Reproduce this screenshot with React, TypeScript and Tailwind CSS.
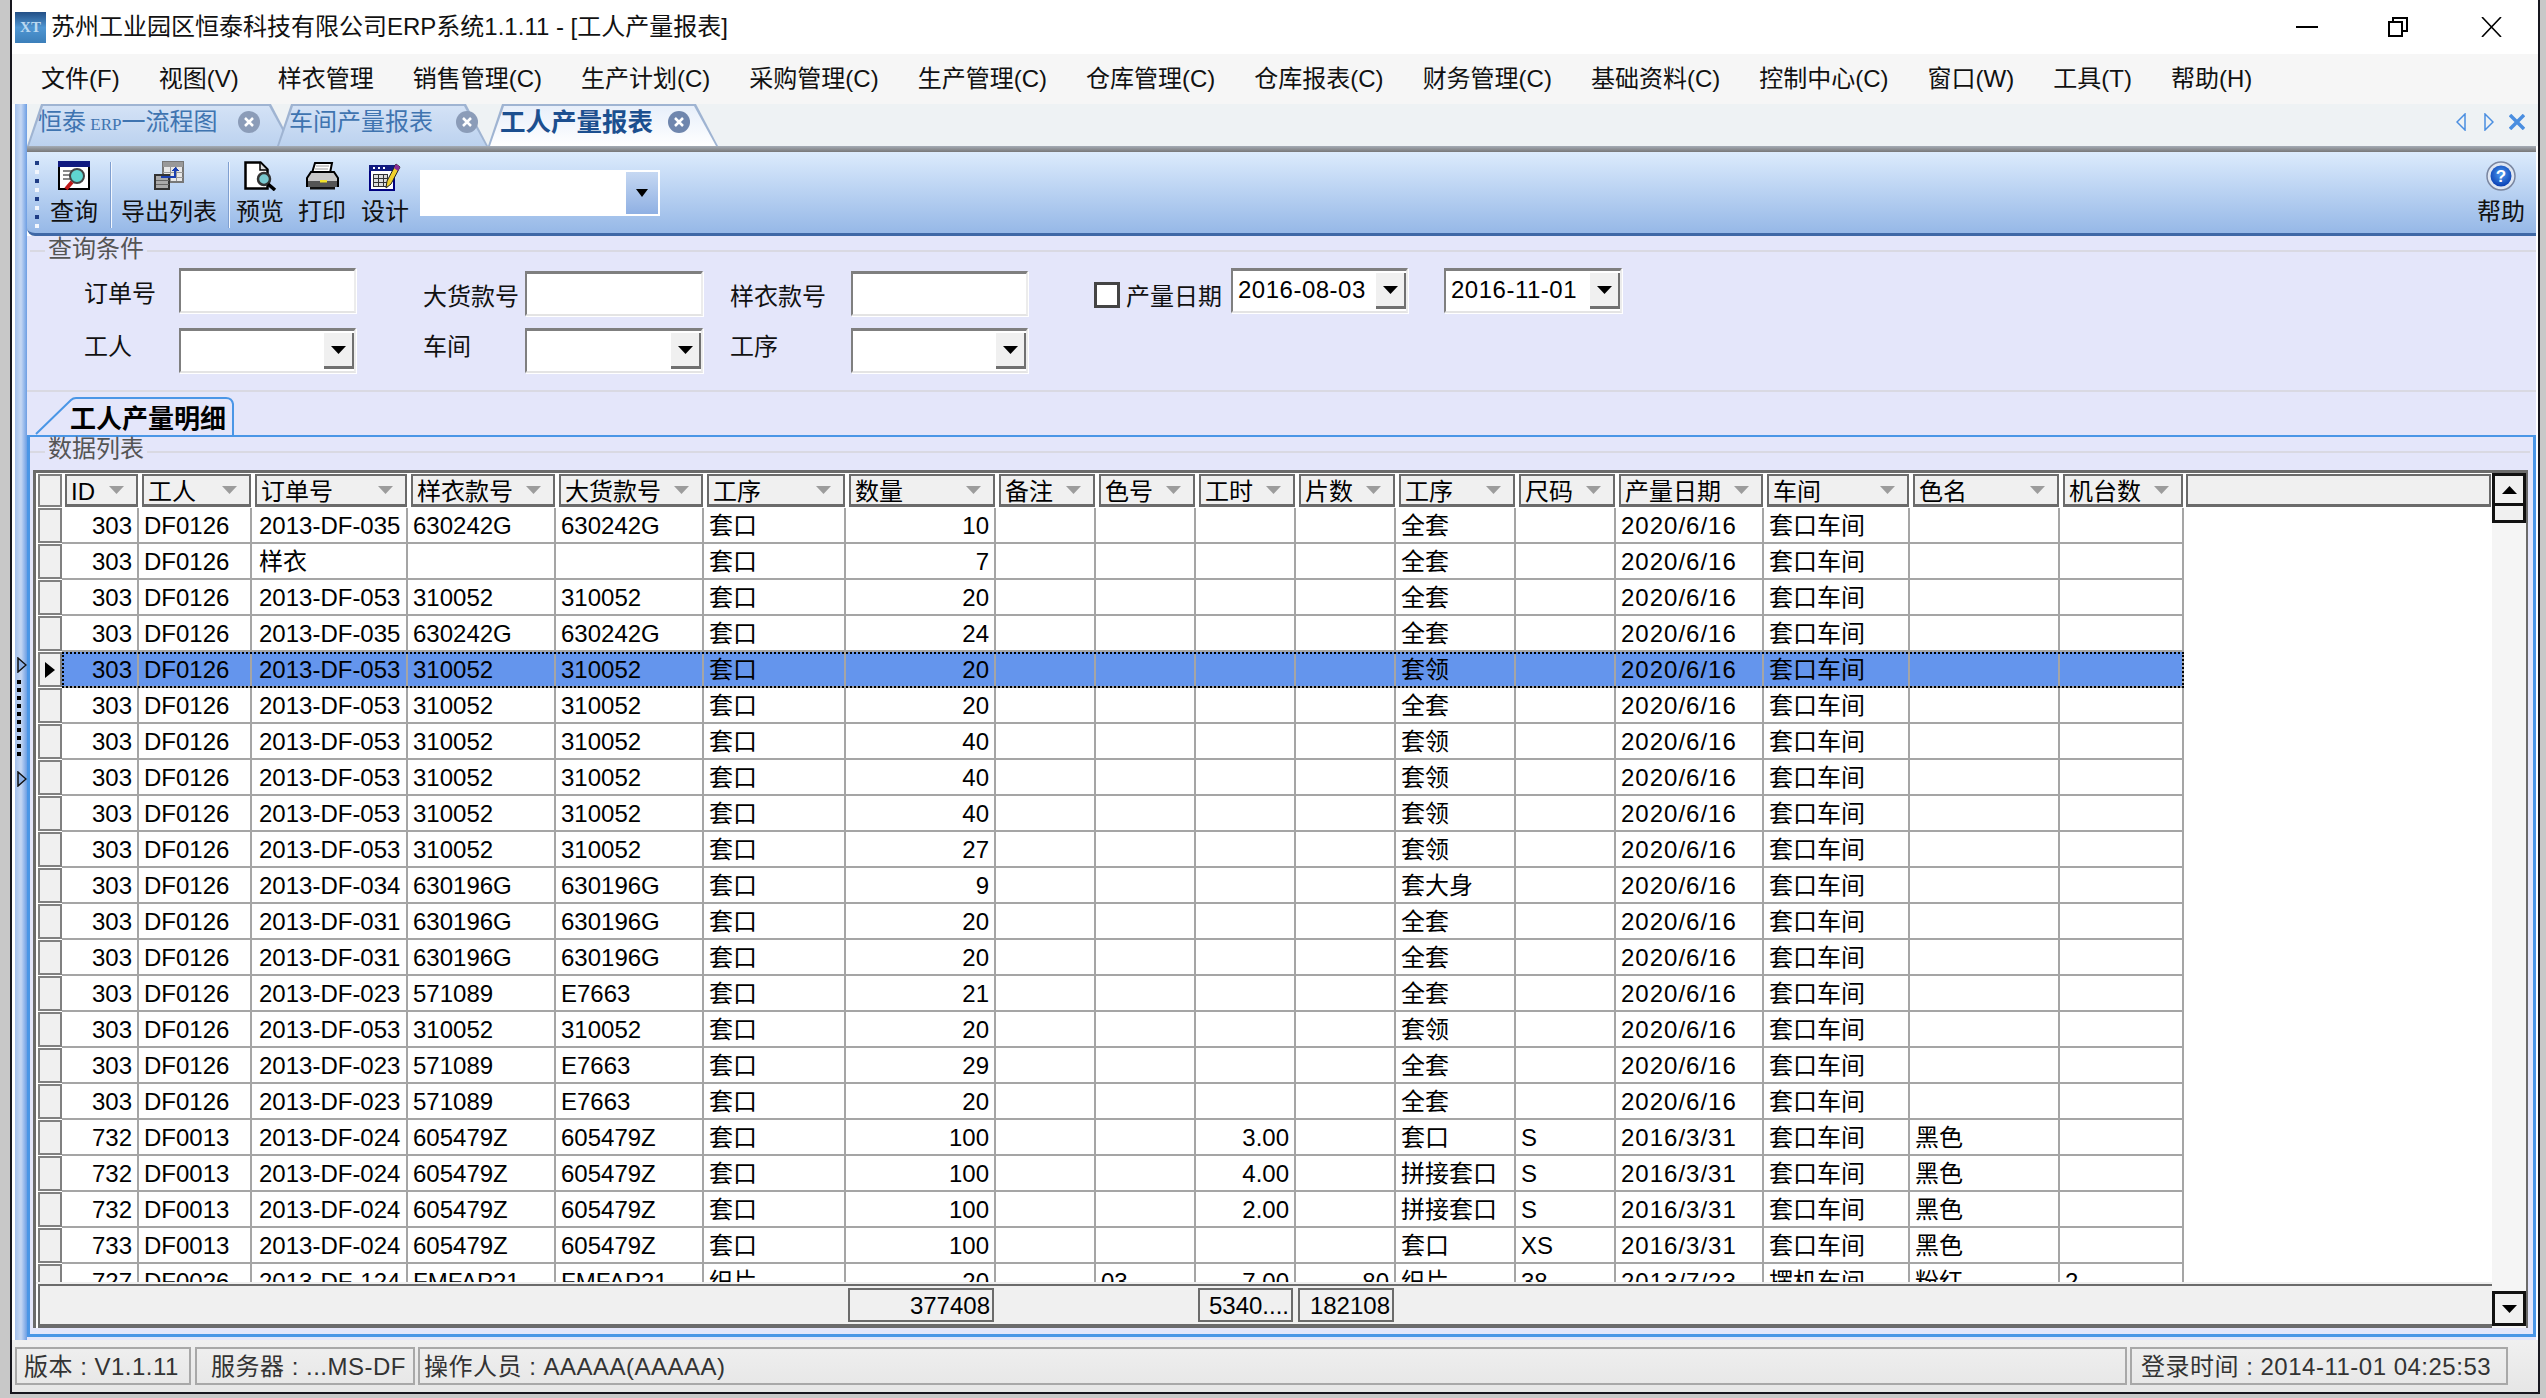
import type { ReactNode } from "react";

const font = "[font-family:'Liberation_Sans','Noto_Sans_CJK_SC',sans-serif]";

const menus = [
  "文件(F)",
  "视图(V)",
  "样衣管理",
  "销售管理(C)",
  "生产计划(C)",
  "采购管理(C)",
  "生产管理(C)",
  "仓库管理(C)",
  "仓库报表(C)",
  "财务管理(C)",
  "基础资料(C)",
  "控制中心(C)",
  "窗口(W)",
  "工具(T)",
  "帮助(H)",
];

const columns = [
  { name: "ID", w: "w-[77px]", cell: "justify-end pr-[5px]" },
  { name: "工人", w: "w-[113px]", cell: "pl-[5px]" },
  { name: "订单号", w: "w-[156px]", cell: "pl-[7px]" },
  { name: "样衣款号", w: "w-[148px]", cell: "pl-[5px]" },
  { name: "大货款号", w: "w-[148px]", cell: "pl-[5px]" },
  { name: "工序", w: "w-[142px]", cell: "pl-[5px]" },
  { name: "数量", w: "w-[150px]", cell: "justify-end pr-[5px]" },
  { name: "备注", w: "w-[100px]", cell: "pl-[5px]" },
  { name: "色号", w: "w-[100px]", cell: "pl-[5px]" },
  { name: "工时", w: "w-[100px]", cell: "justify-end pr-[5px]" },
  { name: "片数", w: "w-[100px]", cell: "justify-end pr-[5px]" },
  { name: "工序", w: "w-[120px]", cell: "pl-[5px]" },
  { name: "尺码", w: "w-[100px]", cell: "pl-[5px]" },
  { name: "产量日期", w: "w-[148px]", cell: "pl-[5px] tracking-[1px]" },
  { name: "车间", w: "w-[146px]", cell: "pl-[5px]" },
  { name: "色名", w: "w-[150px]", cell: "pl-[5px]" },
  { name: "机台数", w: "w-[124px]", cell: "pl-[5px]" },
];

// order, style, bulk, qty, process
const first: [string, string, string, string, string][] = [
  ["2013-DF-035", "630242G", "630242G", "10", "全套"],
  ["样衣", "", "", "7", "全套"],
  ["2013-DF-053", "310052", "310052", "20", "全套"],
  ["2013-DF-035", "630242G", "630242G", "24", "全套"],
  ["2013-DF-053", "310052", "310052", "20", "套领"],
  ["2013-DF-053", "310052", "310052", "20", "全套"],
  ["2013-DF-053", "310052", "310052", "40", "套领"],
  ["2013-DF-053", "310052", "310052", "40", "套领"],
  ["2013-DF-053", "310052", "310052", "40", "套领"],
  ["2013-DF-053", "310052", "310052", "27", "套领"],
  ["2013-DF-034", "630196G", "630196G", "9", "套大身"],
  ["2013-DF-031", "630196G", "630196G", "20", "全套"],
  ["2013-DF-031", "630196G", "630196G", "20", "全套"],
  ["2013-DF-023", "571089", "E7663", "21", "全套"],
  ["2013-DF-053", "310052", "310052", "20", "套领"],
  ["2013-DF-023", "571089", "E7663", "29", "全套"],
  ["2013-DF-023", "571089", "E7663", "20", "全套"],
];

const rows: string[][] = [
  ...first.map((r) => [
    "303", "DF0126", r[0], r[1], r[2], "套口", r[3], "", "", "", "", r[4], "", "2020/6/16", "套口车间", "", "",
  ]),
  ["732", "DF0013", "2013-DF-024", "605479Z", "605479Z", "套口", "100", "", "", "3.00", "", "套口", "S", "2016/3/31", "套口车间", "黑色", ""],
  ["732", "DF0013", "2013-DF-024", "605479Z", "605479Z", "套口", "100", "", "", "4.00", "", "拼接套口", "S", "2016/3/31", "套口车间", "黑色", ""],
  ["732", "DF0013", "2013-DF-024", "605479Z", "605479Z", "套口", "100", "", "", "2.00", "", "拼接套口", "S", "2016/3/31", "套口车间", "黑色", ""],
  ["733", "DF0013", "2013-DF-024", "605479Z", "605479Z", "套口", "100", "", "", "", "", "套口", "XS", "2016/3/31", "套口车间", "黑色", ""],
  ["727", "DF0026", "2013-DF-124", "FMFAP21", "FMFAP21", "织片", "20", "", "03", "7.00", "80", "织片", "38", "2013/7/23", "摆机车间", "粉红", "2"],
];

function Arrow({ up, className = "" }: { up?: boolean; className?: string }) {
  return (
    <svg width="15" height="8" viewBox="0 0 15 8" className={className}>
      <polygon points={up ? "7.5,0 15,8 0,8" : "0,0 15,0 7.5,8"} fill="#000" />
    </svg>
  );
}

function QueryIcon() {
  return (
    <svg width="32" height="30" viewBox="0 0 32 30" shapeRendering="crispEdges">
      <rect x="1" y="1" width="30" height="27" fill="#fff" stroke="#000" strokeWidth="2" />
      <rect x="0" y="0" width="32" height="6" fill="#101a80" />
      <rect x="5" y="9" width="11" height="2" fill="#888" />
      <rect x="5" y="13" width="8" height="2" fill="#888" />
      <rect x="5" y="17" width="7" height="2" fill="#888" />
      <circle cx="19" cy="15" r="7" fill="#5fd6d0" stroke="#444" strokeWidth="2" shapeRendering="auto" />
      <line x1="14" y1="21" x2="8" y2="28" stroke="#c01818" strokeWidth="4" shapeRendering="auto" />
    </svg>
  );
}

function ExportIcon() {
  return (
    <svg width="30" height="30" viewBox="0 0 30 30" shapeRendering="crispEdges">
      <rect x="9" y="1" width="20" height="20" fill="#e8e8e8" stroke="#777" strokeWidth="2" />
      <rect x="9" y="1" width="20" height="5" fill="#999" />
      <path d="M16 6v14M22 6v14M9 11h20M9 16h20" stroke="#999" />
      <rect x="1" y="14" width="14" height="14" fill="#aaa" stroke="#333" strokeWidth="2" />
      <path d="M2 19h13M2 23h13" stroke="#666" />
      <path d="M7 15h13v-5h-3l4-4 4 4h-3v7H7z" fill="#1a3fb0" />
    </svg>
  );
}

function PreviewIcon() {
  return (
    <svg width="33" height="30" viewBox="0 0 33 30">
      <path d="M1.5 1.5h15l7 7v19h-22z" fill="#fff" stroke="#000" strokeWidth="2.5" />
      <path d="M16 2v7h7" fill="#ddd" stroke="#000" strokeWidth="1.5" />
      <circle cx="20" cy="18" r="6" fill="#79c9cf" stroke="#333" strokeWidth="2.5" />
      <line x1="24" y1="23" x2="31" y2="29" stroke="#000" strokeWidth="3.5" />
    </svg>
  );
}

function PrintIcon() {
  return (
    <svg width="33" height="28" viewBox="0 0 33 28">
      <path d="M9 1h17l-2 10H6z" fill="#fff" stroke="#000" strokeWidth="2" />
      <path d="M10 4h13M9 7h13" stroke="#999" />
      <path d="M5 10h23l4 6v8H1v-8z" fill="#c8c8c8" stroke="#000" strokeWidth="2" />
      <rect x="2" y="19" width="29" height="6" fill="#555" />
      <rect x="14" y="18" width="7" height="2.5" fill="#f2e22c" />
      <rect x="4" y="25" width="25" height="2.5" fill="#111" />
    </svg>
  );
}

function DesignIcon() {
  return (
    <svg width="33" height="30" viewBox="0 0 33 30" shapeRendering="crispEdges">
      <rect x="1" y="5" width="24" height="24" fill="#fff" stroke="#000080" strokeWidth="2" />
      <rect x="0" y="4" width="26" height="6" fill="#101a80" />
      <path d="M4 6h2v2H4zM9 6h2v2H9zM14 6h2v2h-2z" fill="#fff" />
      <path d="M4 13h14v12H4z" fill="#ddd" stroke="#333" />
      <path d="M9 13v12M14 13v12M4 17h14M4 21h14" stroke="#333" />
      <path d="M27 3l4 3-9 17-5 4 1-7z" fill="#f0d02c" stroke="#222" shapeRendering="auto" />
      <path d="M27 3l4 3-2 4-4-3z" fill="#8a2a9a" shapeRendering="auto" />
    </svg>
  );
}

function HelpIcon() {
  return (
    <svg width="30" height="30" viewBox="0 0 30 30">
      <defs>
        <radialGradient id="help" cx="50%" cy="40%" r="60%">
          <stop offset="0%" stopColor="#4d9bf0" />
          <stop offset="100%" stopColor="#0a3fb4" />
        </radialGradient>
      </defs>
      <circle cx="15" cy="15" r="14" fill="#dfe6f2" stroke="#7a86a0" strokeWidth="1.5" />
      <circle cx="15" cy="15" r="10.5" fill="url(#help)" />
      <text x="15" y="21" textAnchor="middle" fontSize="17" fontWeight="700" fill="#fff" fontFamily="Liberation Sans">
        ?
      </text>
    </svg>
  );
}

function ToolButton({ w, label, icon }: { w: string; label: string; icon: ReactNode }) {
  return (
    <div className={`${w} flex flex-col items-center shrink-0`}>
      <div className="h-[32px] flex items-center justify-center">{icon}</div>
      <div className="mt-[4px] h-[32px] leading-[32px] whitespace-nowrap text-[#111]">{label}</div>
    </div>
  );
}

function Separator() {
  return <div className="w-[2px] h-[66px] mt-[2px] bg-[#f2f7fe] border-l border-[#7f9fd0] shrink-0" />;
}

function TabClose({ active }: { active?: boolean }) {
  return (
    <div
      className={`w-[22px] h-[22px] rounded-full flex items-center justify-center shrink-0 ${
        active ? "bg-[#6f86ad]" : "bg-[#8b9cb8]"
      }`}
    >
      <svg width="10" height="10" viewBox="0 0 10 10">
        <path d="M1 1l8 8M9 1l-8 8" stroke="#fff" strokeWidth="2.5" />
      </svg>
    </div>
  );
}

function Tab({ w, active, children, className = "" }: { w: string; active?: boolean; children: ReactNode; className?: string }) {
  return (
    <div className={`${w} ${className} relative h-[42px] shrink-0`}>
      <div className="absolute inset-0 bg-[#9fb4d2] [clip-path:polygon(14px_0,calc(100%-22px)_0,100%_100%,0_100%)]" />
      <div
        className={`absolute inset-y-0 inset-x-[2px] bg-gradient-to-b [clip-path:polygon(14px_2px,calc(100%-22px)_2px,100%_100%,0_100%)] ${
          active ? "from-[#e6eefa] to-white" : "from-[#d5e3f6] to-[#bcd2ef]"
        }`}
      />
      <div
        className={`relative h-full pb-[6px] flex items-center ${
          active ? "text-[#1c4f8f] font-bold text-[25.5px]" : "text-[#3f74b0]"
        }`}
      >
        {children}
      </div>
    </div>
  );
}

function Legend({ text }: { text: string }) {
  return (
    <div className="flex items-center h-full">
      <div className="w-[15px] h-[2px] bg-[#d9d9e2] shrink-0 ml-[3px]" />
      <span className="text-[#555] px-[3px] -mt-[5px] whitespace-nowrap leading-none">{text}</span>
      <div className="flex-1 h-[2px] bg-[#d9d9e2]" />
    </div>
  );
}

const sunken =
  "bg-white border-t-[3px] border-l-[2px] border-r-[2px] border-b-[2px] border-t-[#7f7f7f] border-l-[#7f7f7f] border-r-[#ececec] border-b-[#e4e4e4] shadow-[1px_1px_0_#fff] shrink-0";

function Field({ w, className = "" }: { w: string; className?: string }) {
  return <div className={`${sunken} ${w} h-[45px] ${className}`} />;
}

function DropButton({ className = "" }: { className?: string }) {
  return (
    <div
      className={`w-[30px] h-[36px] bg-[#f0f0f0] border-r-[2px] border-b-[3px] border-[#707070] flex items-center justify-center shrink-0 ${className}`}
    >
      <Arrow />
    </div>
  );
}

function SelectBox({ w, value }: { w: string; value?: string }) {
  return (
    <div className={`${sunken} ${w} h-[45px] flex items-start justify-between`}>
      <span className="pl-[5px] leading-[37px] tracking-[0.5px] whitespace-nowrap text-black">{value}</span>
      <DropButton className="mt-[2px]" />
    </div>
  );
}

function Label({ w, className = "", children }: { w: string; className?: string; children: ReactNode }) {
  return <div className={`${w} ${className} leading-[36px] shrink-0 whitespace-nowrap text-[#111]`}>{children}</div>;
}

function HeaderCell({ w, text }: { w: string; text: string }) {
  return (
    <div className={`${w} h-full pl-[3px] pr-[1px] shrink-0`}>
      <div className="h-full bg-[#f0f0f0] border-2 border-b-[3px] border-[#6b6b6b] flex items-center justify-between pl-[4px] pr-[12px]">
        <span className="whitespace-nowrap leading-none pt-[4px]">{text}</span>
        <svg width="15" height="8" viewBox="0 0 15 8" className="shrink-0">
          <polygon points="0,0 15,0 7.5,8" fill="#9c9c9c" />
        </svg>
      </div>
    </div>
  );
}

function StatusCell({ w, text, className = "" }: { w: string; text: string; className?: string }) {
  return (
    <div
      className={`${w} ${className} h-[38px] border-2 border-[#a8a8a8] flex items-center pt-[2px] tracking-[0.5px] shrink-0 whitespace-nowrap text-[#333]`}
    >
      {text}
    </div>
  );
}

function FootCell({ w, text, className = "" }: { w: string; text: string; className?: string }) {
  return (
    <div className={`${w} ${className} h-[34px] border-2 border-[#6b6b6b] flex items-center justify-end pr-[2px] pt-[2px] shrink-0`}>
      {text}
    </div>
  );
}

function GripTriangle() {
  return (
    <svg width="10" height="16" viewBox="0 0 10 16" className="ml-[2px]">
      <polygon points="1,1 9,8 1,15" fill="#8fb2e6" stroke="#111" strokeWidth="1.5" />
    </svg>
  );
}

export default function App() {
  return (
    <div className={`${font} w-[2546px] h-[1398px] bg-[#c8c8c8] pl-[10px] pr-[6px] pb-[4px] text-[24px] text-black overflow-hidden`}>
      <div className="h-full border-x-2 border-b-2 border-[#16161e] flex flex-col bg-white">
        {/* title bar */}
        <div className="h-[54px] bg-white flex items-center shrink-0 pl-[3px]">
          <div className="w-[31px] h-[31px] bg-gradient-to-b from-[#234f86] via-[#4f96d2] to-[#3c7fba] flex items-center justify-center text-[15px] font-bold text-[#bcd9f0] [font-family:'Liberation_Serif',serif]">
            XT
          </div>
          <span className="ml-[5px] whitespace-nowrap text-[#111]">苏州工业园区恒泰科技有限公司ERP系统1.1.11 - [工人产量报表]</span>
          <div className="ml-auto flex items-center">
            <svg width="22" height="2" viewBox="0 0 22 2">
              <rect width="22" height="2" fill="#000" />
            </svg>
            <svg width="22" height="20" viewBox="0 0 22 20" className="ml-[69px]" fill="none" stroke="#000" strokeWidth="2">
              <rect x="2" y="5" width="13" height="14" />
              <path d="M6 5V1h14v13h-5" />
            </svg>
            <svg width="21" height="20" viewBox="0 0 21 20" className="ml-[72px] mr-[36px]" fill="none" stroke="#000" strokeWidth="1.6">
              <path d="M1 0l19 20M20 0L1 20" />
            </svg>
          </div>
        </div>

        {/* menu */}
        <div className="h-[50px] bg-[#f6f6f6] flex items-center shrink-0 pl-[29px] gap-x-[39px] text-[#111]">
          {menus.map((m) => (
            <span key={m} className="whitespace-nowrap">
              {m}
            </span>
          ))}
        </div>

        <div className="h-[1236px] flex shrink-0">
          {/* left collapse strip */}
          <div className="w-[15px] shrink-0 pl-[3px] bg-white">
            <div className="h-full bg-gradient-to-r from-[#a3bfeb] via-[#c5d7f3] to-[#6d9ee3] pt-[553px] flex flex-col">
              <GripTriangle />
              <div className="mt-[7px] ml-[2px] flex flex-col gap-y-[4px]">
                {[0, 1, 2, 3, 4, 5, 6, 7, 8, 9].map((i) => (
                  <div key={i} className="w-[4px] h-[4px] bg-black" />
                ))}
              </div>
              <div className="mt-[15px]">
                <GripTriangle />
              </div>
            </div>
          </div>

          <div className="flex-1 flex flex-col min-w-0">
            {/* document tabs */}
            <div className="h-[42px] bg-[#eef2f4] flex items-center shrink-0 pr-[13px]">
              <Tab w="w-[266px]">
                <span className="ml-[11px] mr-[21px] whitespace-nowrap">
                  恒泰<span className="text-[17px] [font-family:'Liberation_Serif',serif]"> ERP</span>一流程图
                </span>
                <TabClose />
              </Tab>
              <Tab w="w-[211px]" className="-ml-[16px]">
                <span className="ml-[12px] mr-[23px] whitespace-nowrap">车间产量报表</span>
                <TabClose />
              </Tab>
              <Tab w="w-[230px]" active>
                <span className="ml-[12px] mr-[15px] whitespace-nowrap">工人产量报表</span>
                <TabClose active />
              </Tab>
              <div className="ml-auto mb-[6px] flex items-center">
                <svg width="10" height="18" viewBox="0 0 10 18">
                  <polygon points="9,1 1,9 9,17" fill="none" stroke="#4a8ee0" strokeWidth="1.5" />
                </svg>
                <svg width="10" height="18" viewBox="0 0 10 18" className="ml-[18px]">
                  <polygon points="1,1 9,9 1,17" fill="none" stroke="#4a8ee0" strokeWidth="1.5" />
                </svg>
                <svg width="16" height="16" viewBox="0 0 16 16" className="ml-[15px]">
                  <path d="M1 1l14 14M15 1L1 15" stroke="#4a8ee0" strokeWidth="3.5" />
                </svg>
              </div>
            </div>

            <div className="flex-1 flex flex-col pr-[2px] min-h-0">
              <div className="h-[6px] shrink-0 bg-gradient-to-b from-[#a4acb6] to-[#787878]" />

              {/* toolbar */}
              <div className="h-[84px] shrink-0 bg-gradient-to-b from-[#dcebfc] to-[#96b8e7] border-b-[3px] border-[#3f68a6] rounded-bl-[8px] flex pt-[8px] pl-[8px] pr-[1px]">
                <div className="flex flex-col gap-y-[5px] w-[5px] pt-[1px] shrink-0">
                  {[0, 1, 2, 3, 4, 5, 6, 7].map((i) => (
                    <div key={i} className={`w-[4px] h-[4px] ${i % 2 ? "bg-[#f2f6fd]" : "bg-[#1f3d86]"}`} />
                  ))}
                </div>
                <ToolButton w="w-[68px]" label="查询" icon={<QueryIcon />} />
                <div className="w-[2px] shrink-0" />
                <Separator />
                <ToolButton w="w-[114px]" label="导出列表" icon={<ExportIcon />} />
                <div className="w-[2px] shrink-0" />
                <Separator />
                <ToolButton w="w-[60px]" label="预览" icon={<PreviewIcon />} />
                <ToolButton w="w-[64px]" label="打印" icon={<PrintIcon />} />
                <ToolButton w="w-[62px]" label="设计" icon={<DesignIcon />} />
                <div className="ml-[4px] mt-[10px] w-[240px] h-[46px] bg-white flex justify-end items-center pr-[2px] shrink-0">
                  <div className="w-[32px] h-[42px] bg-gradient-to-b from-[#c6d8f2] to-[#8fb0e3] flex items-center justify-center">
                    <svg width="12" height="8" viewBox="0 0 12 8">
                      <polygon points="0,0 12,0 6,8" fill="#000" />
                    </svg>
                  </div>
                </div>
                <div className="ml-auto">
                  <ToolButton w="w-[68px]" label="帮助" icon={<HelpIcon />} />
                </div>
              </div>

              {/* query + grid panel */}
              <div className="flex-1 bg-[#e4e6fa] flex flex-col min-h-0">
                <div className="h-[30px] shrink-0">
                  <Legend text="查询条件" />
                </div>

                <div className="h-[48px] mt-[2px] flex items-start pl-[57px] shrink-0">
                  <Label w="w-[95px]" className="mt-[8px]">订单号</Label>
                  <Field w="w-[177px]" />
                  <Label w="w-[102px]" className="ml-[67px] mt-[11px]">大货款号</Label>
                  <Field w="w-[178px]" className="mt-[3px]" />
                  <Label w="w-[121px]" className="ml-[27px] mt-[11px]">样衣款号</Label>
                  <Field w="w-[177px]" className="mt-[3px]" />
                  <div className="ml-[66px] mt-[14px] w-[26px] h-[26px] bg-white border-[3px] border-[#444] shrink-0" />
                  <Label w="w-[95px]" className="ml-[6px] mt-[11px]">产量日期</Label>
                  <div className="ml-[10px]">
                    <SelectBox w="w-[177px]" value="2016-08-03" />
                  </div>
                  <div className="ml-[36px]">
                    <SelectBox w="w-[178px]" value="2016-11-01" />
                  </div>
                </div>

                <div className="h-[45px] mt-[12px] flex items-start pl-[57px] shrink-0">
                  <Label w="w-[95px]" className="mt-[1px]">工人</Label>
                  <SelectBox w="w-[177px]" />
                  <Label w="w-[102px]" className="ml-[67px] mt-[1px]">车间</Label>
                  <SelectBox w="w-[178px]" />
                  <Label w="w-[121px]" className="ml-[27px] mt-[1px]">工序</Label>
                  <SelectBox w="w-[177px]" />
                </div>

                <div className="h-[2px] mt-[17px] bg-[#d9d9e2] shrink-0" />

                {/* sub tab */}
                <div className="h-[43px] pt-[5px] pl-[8px] shrink-0">
                  <div className="relative w-[200px] h-[38px]">
                    <svg width="200" height="38" viewBox="0 0 200 38" className="absolute inset-0">
                      <path d="M1 37L36 3q2-2 5-2h150q6 0 7 6v31" fill="#e4e6fa" stroke="#4a96e6" strokeWidth="2" />
                    </svg>
                    <div className="relative pl-[35px] pt-[2px] leading-[41px] font-bold text-[26px] whitespace-nowrap">工人产量明细</div>
                  </div>
                </div>

                {/* grid panel */}
                <div className="h-[902px] shrink-0 border-t-2 border-l-[3px] border-r-[3px] border-b-[3px] border-[#4a96e6] flex flex-col">
                  <div className="h-[29px] -ml-[3px] mr-[3px] shrink-0">
                    <Legend text="数据列表" />
                  </div>

                  <div className="mt-[4px] ml-[3px] mr-[5px] h-[858px] shrink-0 border-t-[3px] border-l-[3px] border-r-2 border-[#6b6b6b] flex bg-white">
                    <div className="w-[2456px] shrink-0 flex flex-col">
                      <div className="h-[35px] py-px pl-[2px] flex shrink-0">
                        <div className="w-[24px] h-full bg-[#f0f0f0] border-2 border-[#808080] shrink-0" />
                        {columns.map((c, i) => (
                          <HeaderCell key={i} w={c.w} text={c.name} />
                        ))}
                        <div className="flex-1 h-full pl-[2px] pr-px">
                          <div className="h-full bg-[#f0f0f0] border-2 border-b-[3px] border-[#6b6b6b]" />
                        </div>
                      </div>

                      <div className="h-[774px] overflow-hidden shrink-0">
                        {rows.map((row, r) => (
                          <div key={r} className="h-[36px] flex pl-[2px]">
                            <div className="w-[24px] h-[35px] bg-[#f0f0f0] border-2 border-[#808080] flex items-center justify-center shrink-0">
                              {r === 4 && (
                                <svg width="10" height="16" viewBox="0 0 10 16">
                                  <polygon points="0,0 10,8 0,16" fill="#000" />
                                </svg>
                              )}
                            </div>
                            <div className={`relative flex ${r === 4 ? "bg-[#6495ed]" : ""}`}>
                              {columns.map((c, i) => (
                                <div
                                  key={i}
                                  className={`${c.w} ${c.cell} h-full shrink-0 pt-[2px] border-r-2 border-b-2 border-[#a5a5a5] flex items-center whitespace-nowrap overflow-hidden`}
                                >
                                  {row[i]}
                                </div>
                              ))}
                              {r === 4 && <div className="absolute inset-0 border-2 border-dotted border-black" />}
                            </div>
                          </div>
                        ))}
                      </div>

                      <div className="h-[2px] bg-[#f0f0f0] shrink-0" />

                      <div className="h-[44px] ml-[2px] bg-[#f0f0f0] border-t-2 border-l-2 border-b-[4px] border-[#6b6b6b] flex items-center shrink-0">
                        <FootCell w="w-[146px]" text="377408" className="ml-[808px]" />
                        <FootCell w="w-[95px]" text="5340...." className="ml-[204px]" />
                        <FootCell w="w-[96px]" text="182108" className="ml-[5px]" />
                      </div>
                    </div>

                    {/* scrollbar */}
                    <div className="w-[34px] shrink-0 bg-[#f5f5f5] flex flex-col">
                      <div className="h-[33px] bg-[#f0f0f0] border-[3px] border-[#111] flex items-center justify-center shrink-0">
                        <Arrow up />
                      </div>
                      <div className="h-[17px] bg-[#f0f0f0] border-[3px] border-t-0 border-[#111] shrink-0" />
                      <div className="flex-1" />
                      <div className="h-[35px] mb-[2px] bg-[#f0f0f0] border-[3px] border-[#111] flex items-center justify-center shrink-0">
                        <Arrow />
                      </div>
                    </div>
                  </div>
                </div>
              </div>
            </div>
          </div>
        </div>

        {/* status bar */}
        <div className="h-[52px] shrink-0 bg-gradient-to-b from-[#f0f0f0] to-[#e6e6e6] pt-[7px] pl-[3px] flex">
          <StatusCell w="w-[176px]" text="版本 : V1.1.11" className="pl-[7px]" />
          <StatusCell w="w-[220px]" text="服务器 : ...MS-DF" className="ml-[4px] pl-[14px]" />
          <StatusCell w="w-[1709px]" text="操作人员 : AAAAA(AAAAA)" className="ml-[3px] pl-[4px]" />
          <StatusCell w="w-[378px]" text="登录时间 : 2014-11-01 04:25:53" className="ml-[3px] pl-[9px]" />
        </div>
      </div>
    </div>
  );
}
